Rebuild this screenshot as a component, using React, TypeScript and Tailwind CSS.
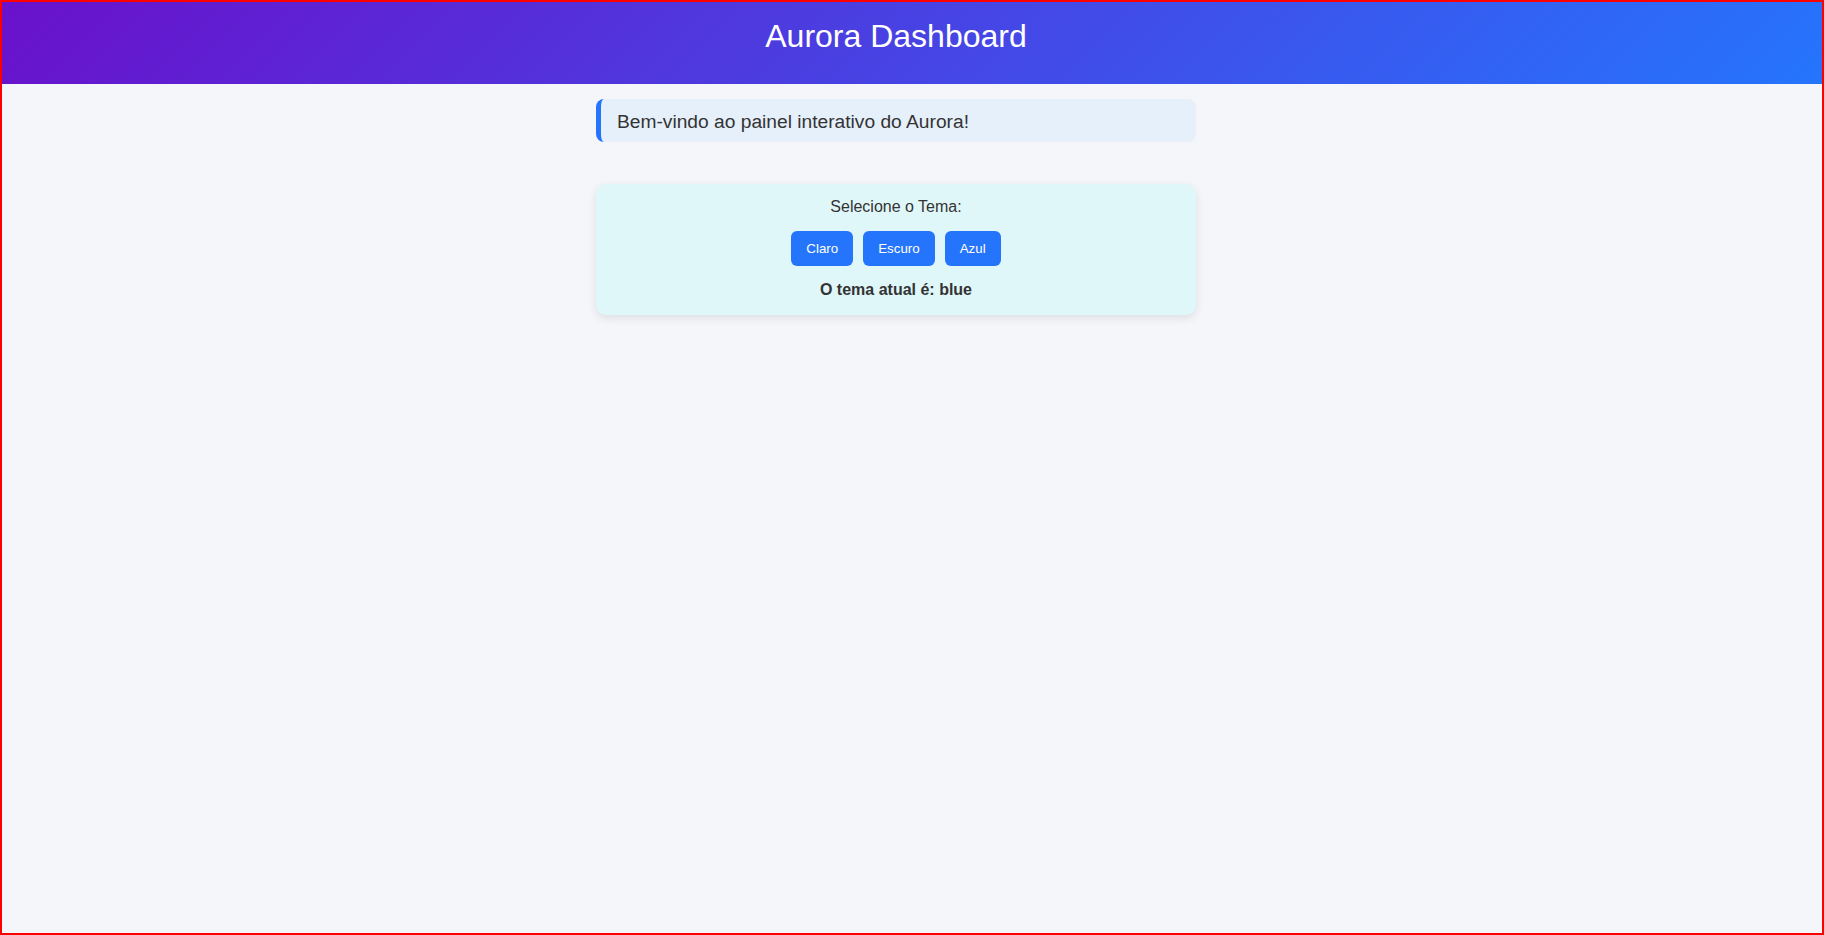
import { useState } from "react";

export default function App() {

  const [theme, setTheme] = useState("blue");

  const temas = [
    { label: "Claro", value: "light" },
    { label: "Escuro", value: "dark" },
    { label: "Azul", value: "blue" },
  ];

  return (
    <div className="h-[935px] border-2 border-[#ff0000] bg-[#f4f6fa] font-['Liberation_Sans',Arial,sans-serif] text-[#333]">

      <header className="h-[82px] pt-[16px] pr-[32px] bg-[linear-gradient(135deg,#6a11cb_0%,#2575fc_100%)]">
        <h1 className="text-center text-[32px] leading-[37px] text-white font-normal">
          Aurora Dashboard
        </h1>
      </header>

      <main className="pr-[32px] pt-[15px]">

        <div className="mx-auto w-[600px] h-[43px] pt-[12px] pl-4 bg-[#e6f0fb] border-l-[5px] border-[#2575fc] rounded-lg">
          <p className="text-[19.2px] leading-[22px]">
            Bem-vindo ao painel interativo do Aurora!
          </p>
        </div>

        <div className="mx-auto mt-[42px] w-[600px] pt-[14px] pb-[16px] bg-[#e0f7fa] rounded-[10px] shadow-[0_3px_10px_rgba(0,0,0,0.1)] text-center">

          <p className="text-[16px] leading-[18px]">
            Selecione o Tema:
          </p>

          <div className="mt-[15px] flex justify-center gap-[10px]">
            {temas.map((t) => (
              <button
                key={t.value}
                onClick={() => setTheme(t.value)}
                className="h-[35px] px-[15px] py-[10px] text-[13.33px] leading-[15px] text-white bg-[#2575fc] rounded-[6px] cursor-pointer"
              >
                {t.label}
              </button>
            ))}
          </div>

          <p className="mt-[14.5px] text-[16px] leading-[18px] font-bold">
            O tema atual é: {theme}
          </p>

        </div>

      </main>

    </div>
  );
}
